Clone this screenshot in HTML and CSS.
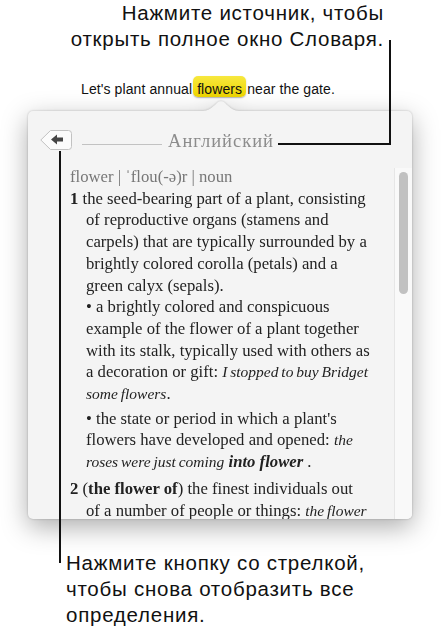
FILE: index.html
```html
<!DOCTYPE html>
<html lang="ru">
<head>
<meta charset="utf-8">
<title>Словарь</title>
<link rel="stylesheet" href="styles.css">
</head>
<body>
<div class="page">
  <p class="note note-top">Нажмите источник, чтобы<br>открыть полное окно Словаря.</p>
  <p class="sentence">Let's plant annual<span class="hl">flowers</span>near the gate.</p>
  <div class="pop-wrap">
    <svg class="beak" width="36" height="11" viewBox="0 0 36 11"><path d="M0 11V10C9 10 13 1 17 0.3Q18 0 19 0.3C23 1 27 10 36 10V11Z" fill="#f4f4f4"/></svg>
    <div class="popover">
      <div class="pop-head">
        <button class="back" type="button" aria-label="Назад">
          <svg width="32" height="20" viewBox="0 0 32 20"><path d="M10.5 0.5H28.5a3 3 0 0 1 3 3v13a3 3 0 0 1-3 3H10.5L0.8 10Z" fill="#fbfbfb" stroke="#c2c2c2"/><path d="M11 9.5L17 4.5v3h6v4h-6v3Z" fill="#454545"/></svg>
        </button>
        <span class="rule"></span>
        <span class="source">Английский</span>
        <span class="rule"></span>
      </div>
      <div class="pop-body">
        <div class="entry">
          <p class="hw">flower | ˈflou(-ə)r | noun</p>
          <div class="sense">
            <b>1</b> the seed-bearing part of a plant, consisting<br>of reproductive organs (stamens and<br>carpels) that are typically surrounded by a<br>brightly colored corolla (petals) and a<br>green calyx (sepals).
            <p class="sub">• a brightly colored and conspicuous<br>example of the flower of a plant together<br>with its stalk, typically used with others as<br>a decoration or gift: <i>I stopped to buy Bridget</i><br><i>some flowers</i>.</p>
            <p class="sub sub-gap">• the state or period in which a plant's<br>flowers have developed and opened: <i>the</i><br><i>roses were just coming</i> <b class="bi">into flower</b> .</p>
          </div>
          <div class="sense sense-2">
            <b>2</b> (<b>the flower of</b>) the finest individuals out<br>of a number of people or things: <i>the flower</i>
          </div>
        </div>
        <div class="scroll"><div class="knob"></div></div>
      </div>
    </div>
  </div>
  <p class="note note-bottom">Нажмите кнопку со стрелкой,<br>чтобы снова отобразить все<br>определения.</p>
  <div class="lead lead-right-v"></div>
  <div class="lead lead-right-h"></div>
  <div class="lead lead-left"></div>
</div>
</body>
</html>
```

FILE: styles.css
```css
body {
  margin: 0;
  background: #fff;
}

.page {
  position: relative;
  width: 442px;
  height: 634px;
  overflow: hidden;
  font-family: "Liberation Sans", Arial, sans-serif;
  color: #111;
}

.note {
  margin: 0;
  font-size: 20.5px;
  letter-spacing: 0.75px;
  line-height: 26px;
  color: #111;
}

.note-top {
  height: 52px;
  text-align: right;
  padding-right: 58px;
}

.sentence {
  margin: 24px 0 0;
  padding-left: 81px;
  height: 25px;
  font-size: 14px;
  letter-spacing: 0.1px;
  line-height: 21px;
  white-space: nowrap;
  color: #111;
}

.hl {
  display: inline-block;
  padding: 6px 4px 0;
  margin: 0 1px;
  line-height: 15px;
  border-radius: 5px;
  background: linear-gradient(#f7e83f, #efd600);
  box-shadow: 0 1px 1.5px rgba(0, 0, 0, 0.3);
}

.pop-wrap {
  position: relative;
  margin: 10px 0 0 28px;
  width: 384px;
  filter: drop-shadow(0 0 1px rgba(0, 0, 0, 0.22)) drop-shadow(0 8px 13px rgba(0, 0, 0, 0.32));
}

.beak {
  position: absolute;
  left: 175px;
  top: -10px;
  display: block;
}

.popover {
  height: 408px;
  background: #f4f4f4;
  border-radius: 5px;
  overflow: hidden;
  display: flex;
  flex-direction: column;
}

.pop-head {
  display: flex;
  align-items: center;
  gap: 6px;
  height: 20px;
  padding: 19px 52px 0 12px;
}

.back {
  display: block;
  width: 32px;
  height: 20px;
  padding: 0;
  margin-right: 4px;
  border: 0;
  background: none;
}

.back svg {
  display: block;
}

.rule {
  flex: 1;
  height: 1px;
  margin-top: 8px;
  background: #c2c2c2;
}

.source {
  margin-top: 2px;
  font-family: "Liberation Serif", "Times New Roman", serif;
  font-size: 18.5px;
  letter-spacing: 1px;
  line-height: 20px;
  color: #8c8c8c;
  white-space: nowrap;
}

.pop-body {
  flex: 1;
  min-height: 0;
  display: flex;
  margin-top: 16px;
}

.entry {
  flex: 1;
  min-width: 0;
  padding-left: 42px;
  font-family: "Liberation Serif", "Times New Roman", serif;
  font-size: 16.7px;
  line-height: 21.7px;
  color: #222;
  white-space: nowrap;
  overflow: hidden;
}

.entry p {
  margin: 0;
}

.entry i {
  font-size: 15.5px;
  line-height: 1;
  word-spacing: -1px;
}

.entry .bi {
  font-style: italic;
}

.hw {
  color: #777;
}

.sense {
  padding-left: 16px;
  text-indent: -16px;
}

.sense .sub {
  text-indent: 0;
}

.entry .sub-gap {
  margin-top: 3px;
}

.sense-2 {
  margin-top: 5px;
}

.scroll {
  width: 13px;
  margin-top: 2px;
  padding: 4px 0 0 4px;
  background: #f9f9f9;
  border-left: 1px solid #e6e6e6;
}

.knob {
  width: 9px;
  height: 122px;
  border-radius: 5px;
  background: #c1c1c1;
}

.note-bottom {
  margin-top: 31px;
  padding-left: 66px;
}

.lead {
  position: absolute;
  background: #111;
}

.lead-right-v {
  left: 389px;
  top: 40px;
  width: 2px;
  height: 105px;
}

.lead-right-h {
  left: 278px;
  top: 143px;
  width: 113px;
  height: 2px;
}

.lead-left {
  left: 59px;
  top: 151px;
  width: 2px;
  height: 412px;
}
```
